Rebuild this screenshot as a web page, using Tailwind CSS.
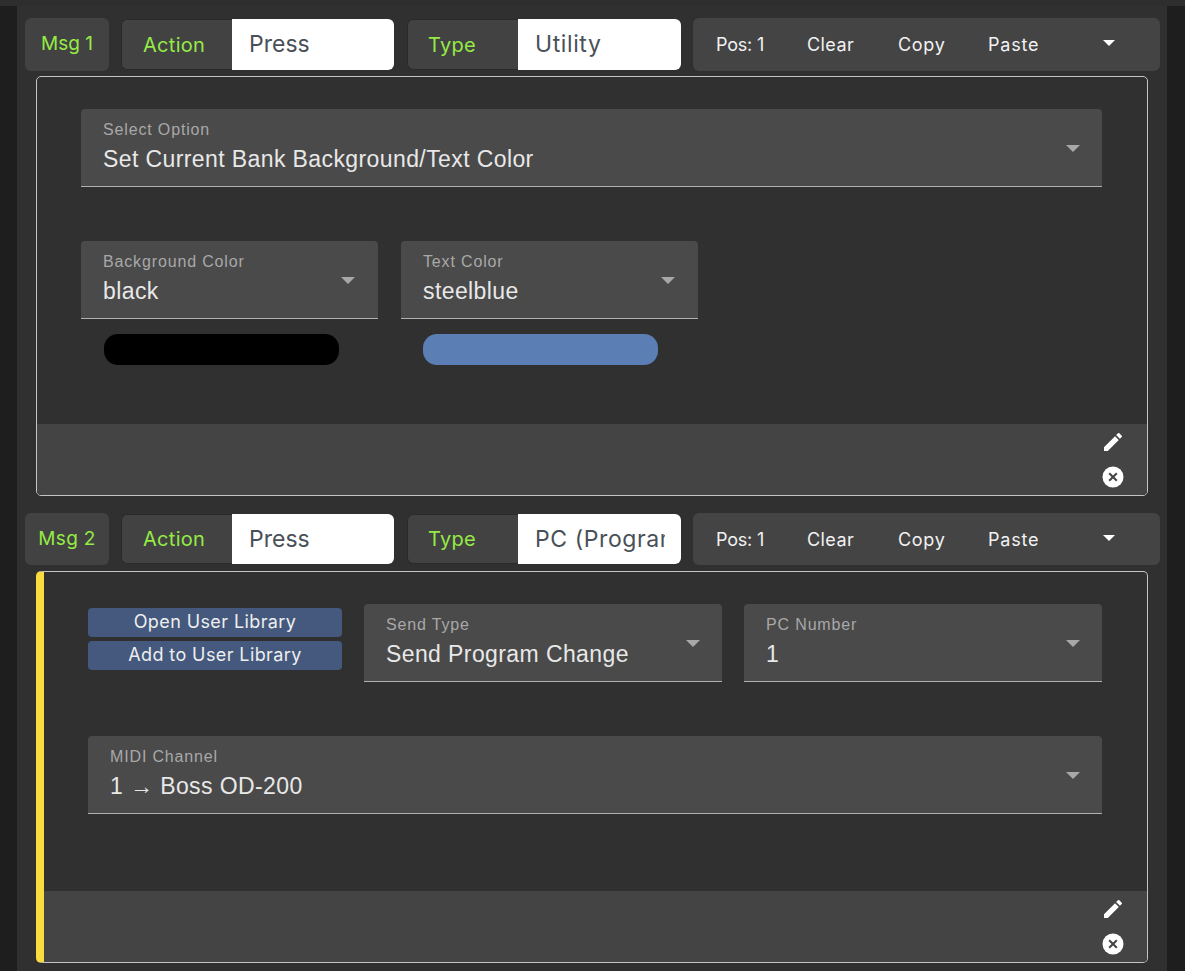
<!DOCTYPE html>
<html>
<head>
<meta charset="utf-8">
<script src="https://cdn.jsdelivr.net/npm/@tailwindcss/browser@4"></script>
</head>
<body class="bg-[#2e2e2e] font-['Liberation_Sans',sans-serif] overflow-hidden">
<div class="h-[971px] pt-[6px] bg-[#2e2e2e]">
  <div class="h-[965px] bg-[#1e1e1e] px-[17px]">
    <div class="h-[965px] w-[1150px] bg-[#303030] pt-[12px] pl-[8px]">

      <!-- Msg 1 -->
      <div class="flex h-[53px] font-['Inter',sans-serif] text-[20px]">
        <div class="w-[84px] flex items-center justify-center bg-[#424242] rounded-md text-[#95ea45] text-[19px]">Msg 1</div>
        <div class="ml-[12px] w-[273px] my-[1px] flex rounded-md overflow-hidden">
          <div class="w-[111px] shrink-0 flex items-center pl-[21px] bg-[#424242] border border-r-0 border-[#2a2a2a] rounded-l-md text-[#95ea45] tracking-[0.3px]">Action</div>
          <div class="flex-1 min-w-0 flex items-center pl-[17px] bg-white text-[#495057] text-[23px]">Press</div>
        </div>
        <div class="ml-[13px] w-[274px] my-[1px] flex rounded-md overflow-hidden">
          <div class="w-[111px] shrink-0 flex items-center pl-[20px] bg-[#424242] border border-r-0 border-[#2a2a2a] rounded-l-md text-[#95ea45] tracking-[0.3px]">Type</div>
          <div class="flex-1 min-w-0 flex items-center pl-[17px] bg-white text-[#495057] text-[23px] tracking-[0.6px]">Utility</div>
        </div>
        <div class="ml-[12px] w-[467px] flex items-center bg-[#444444] rounded-md text-[#f2f2f2] text-[18px] relative">
          <span class="ml-[23px] w-[91px] tracking-[-0.2px]">Pos: 1</span>
          <span class="w-[91px] tracking-[0.4px]">Clear</span>
          <span class="w-[90px] tracking-[0.7px]">Copy</span>
          <span class="tracking-[0.8px]">Paste</span>
          <span class="absolute left-[410px] top-[22px] w-0 h-0 border-x-[6px] border-x-transparent border-t-[6px] border-t-white"></span>
        </div>
      </div>

      <!-- panel 1 -->
      <div class="ml-[11px] mt-[5px] w-[1112px] h-[420px] border border-[#c4c4c4] rounded-[5px] flex flex-col overflow-hidden">
        <div class="flex-1 pt-[32px] pl-[44px]">
          <div class="w-[1021px] h-[78px] bg-[#4a4a4a] rounded-t border-b border-[#b0b0b0] pl-[22px] pt-[12px] relative">
            <div class="text-[16px] leading-[18px] tracking-[0.85px] text-[#a8a8a8]">Select Option</div>
            <div class="text-[23px] leading-[30px] mt-[5px] tracking-[0.4px] text-[#e8e8e8]">Set Current Bank Background/Text Color</div>
            <span class="absolute right-[22px] top-[36px] w-0 h-0 border-x-[7px] border-x-transparent border-t-[7px] border-t-[#a8a8a8]"></span>
          </div>
          <div class="flex gap-[23px] mt-[54px]">
            <div class="w-[297px]">
              <div class="h-[78px] bg-[#4a4a4a] rounded-t border-b border-[#b0b0b0] pl-[22px] pt-[12px] relative">
                <div class="text-[16px] leading-[18px] tracking-[0.85px] text-[#a8a8a8]">Background Color</div>
                <div class="text-[23px] leading-[30px] mt-[5px] tracking-[0.4px] text-[#e8e8e8]">black</div>
                <span class="absolute right-[23px] top-[36px] w-0 h-0 border-x-[7px] border-x-transparent border-t-[7px] border-t-[#a8a8a8]"></span>
              </div>
              <div class="ml-[23px] mt-[15px] w-[235px] h-[31px] rounded-[14px] bg-black"></div>
            </div>
            <div class="w-[297px]">
              <div class="h-[78px] bg-[#4a4a4a] rounded-t border-b border-[#b0b0b0] pl-[22px] pt-[12px] relative">
                <div class="text-[16px] leading-[18px] tracking-[0.85px] text-[#a8a8a8]">Text Color</div>
                <div class="text-[23px] leading-[30px] mt-[5px] tracking-[0.4px] text-[#e8e8e8]">steelblue</div>
                <span class="absolute right-[23px] top-[36px] w-0 h-0 border-x-[7px] border-x-transparent border-t-[7px] border-t-[#a8a8a8]"></span>
              </div>
              <div class="ml-[22px] mt-[15px] w-[235px] h-[31px] rounded-[14px] bg-[#5b7fb5]"></div>
            </div>
          </div>
        </div>
        <div class="h-[71px] bg-[#444444] flex flex-col items-end pr-[22px] pt-[6px] gap-[12px]">
          <svg class="w-[24px] h-[24px]" viewBox="0 0 24 24" fill="#fff"><path d="M3 17.25V21h3.75L17.81 9.94l-3.75-3.75L3 17.25zM20.71 7.04a1 1 0 0 0 0-1.41l-2.34-2.34a1 1 0 0 0-1.41 0l-1.83 1.83 3.75 3.75 1.83-1.83z"/></svg>
          <svg class="w-[22px] h-[22px] mr-[1px]" viewBox="0 0 22 22"><circle cx="11" cy="11" r="10.5" fill="#fff"/><path d="M7.2 7.2l7.6 7.6M14.8 7.2l-7.6 7.6" stroke="#444" stroke-width="2"/></svg>
        </div>
      </div>

      <!-- Msg 2 -->
      <div class="flex h-[52px] mt-[17px] font-['Inter',sans-serif] text-[20px]">
        <div class="w-[84px] flex items-center justify-center bg-[#424242] rounded-md text-[#95ea45] text-[19px] tracking-[0.3px]">Msg 2</div>
        <div class="ml-[12px] w-[273px] my-[1px] flex rounded-md overflow-hidden">
          <div class="w-[111px] shrink-0 flex items-center pl-[21px] bg-[#424242] border border-r-0 border-[#2a2a2a] rounded-l-md text-[#95ea45] tracking-[0.3px]">Action</div>
          <div class="flex-1 min-w-0 flex items-center pl-[17px] bg-white text-[#495057] text-[23px]">Press</div>
        </div>
        <div class="ml-[13px] w-[274px] my-[1px] flex rounded-md overflow-hidden">
          <div class="w-[111px] shrink-0 flex items-center pl-[20px] bg-[#424242] border border-r-0 border-[#2a2a2a] rounded-l-md text-[#95ea45] tracking-[0.3px]">Type</div>
          <div class="flex-1 min-w-0 flex items-center pl-[17px] pr-[16px] bg-white text-[#495057] text-[23px] tracking-[0.6px]">
            <span class="block w-full overflow-hidden whitespace-nowrap">PC (Program Change)</span>
          </div>
        </div>
        <div class="ml-[12px] w-[467px] flex items-center bg-[#444444] rounded-md text-[#f2f2f2] text-[18px] relative">
          <span class="ml-[23px] w-[91px] tracking-[-0.2px]">Pos: 1</span>
          <span class="w-[91px] tracking-[0.4px]">Clear</span>
          <span class="w-[90px] tracking-[0.7px]">Copy</span>
          <span class="tracking-[0.8px]">Paste</span>
          <span class="absolute left-[410px] top-[22px] w-0 h-0 border-x-[6px] border-x-transparent border-t-[6px] border-t-white"></span>
        </div>
      </div>

      <!-- panel 2 -->
      <div class="ml-[11px] mt-[6px] w-[1112px] h-[392px] border border-[#c4c4c4] border-l-[8px] border-l-[#fbdc3f] rounded-[5px] flex flex-col overflow-hidden">
        <div class="flex-1 pt-[32px] pl-[44px] pr-[45px]">
          <div class="flex">
            <div class="w-[254px] pt-[4px] flex flex-col gap-[4px] font-['Inter',sans-serif] text-[18px] tracking-[0.4px] text-[#eeeeee]">
              <div class="h-[29px] pb-[2px] flex items-center justify-center bg-[#44597d] rounded">Open User Library</div>
              <div class="h-[29px] pb-[2px] flex items-center justify-center bg-[#44597d] rounded">Add to User Library</div>
            </div>
            <div class="ml-[22px] w-[358px] h-[78px] bg-[#4a4a4a] rounded-t border-b border-[#b0b0b0] pl-[22px] pt-[12px] relative">
              <div class="text-[16px] leading-[18px] tracking-[0.85px] text-[#a8a8a8]">Send Type</div>
              <div class="text-[23px] leading-[30px] mt-[5px] tracking-[0.4px] text-[#e8e8e8]">Send Program Change</div>
              <span class="absolute right-[22px] top-[36px] w-0 h-0 border-x-[7px] border-x-transparent border-t-[7px] border-t-[#a8a8a8]"></span>
            </div>
            <div class="ml-[22px] w-[358px] h-[78px] bg-[#4a4a4a] rounded-t border-b border-[#b0b0b0] pl-[22px] pt-[12px] relative">
              <div class="text-[16px] leading-[18px] tracking-[0.85px] text-[#a8a8a8]">PC Number</div>
              <div class="text-[23px] leading-[30px] mt-[5px] tracking-[0.4px] text-[#e8e8e8]">1</div>
              <span class="absolute right-[22px] top-[36px] w-0 h-0 border-x-[7px] border-x-transparent border-t-[7px] border-t-[#a8a8a8]"></span>
            </div>
          </div>
          <div class="mt-[54px] w-[1014px] h-[78px] bg-[#4a4a4a] rounded-t border-b border-[#b0b0b0] pl-[22px] pt-[12px] relative">
            <div class="text-[16px] leading-[18px] tracking-[0.85px] text-[#a8a8a8]">MIDI Channel</div>
            <div class="text-[23px] leading-[30px] mt-[5px] tracking-[0.4px] text-[#e8e8e8]">1 → Boss OD-200</div>
            <span class="absolute right-[22px] top-[36px] w-0 h-0 border-x-[7px] border-x-transparent border-t-[7px] border-t-[#a8a8a8]"></span>
          </div>
        </div>
        <div class="h-[71px] bg-[#444444] flex flex-col items-end pr-[22px] pt-[6px] gap-[12px]">
          <svg class="w-[24px] h-[24px]" viewBox="0 0 24 24" fill="#fff"><path d="M3 17.25V21h3.75L17.81 9.94l-3.75-3.75L3 17.25zM20.71 7.04a1 1 0 0 0 0-1.41l-2.34-2.34a1 1 0 0 0-1.41 0l-1.83 1.83 3.75 3.75 1.83-1.83z"/></svg>
          <svg class="w-[22px] h-[22px] mr-[1px]" viewBox="0 0 22 22"><circle cx="11" cy="11" r="10.5" fill="#fff"/><path d="M7.2 7.2l7.6 7.6M14.8 7.2l-7.6 7.6" stroke="#444" stroke-width="2"/></svg>
        </div>
      </div>

    </div>
  </div>
</div>
</body>
</html>
